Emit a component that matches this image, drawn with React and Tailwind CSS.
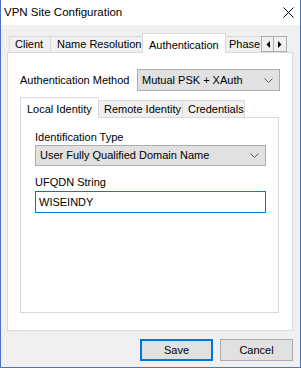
import React from 'react';

const font = { fontFamily: '"Liberation Sans", Arial, sans-serif' };

const Chevron = () => (
  <svg width="9" height="5" viewBox="0 0 9 5" className="block">
    <polyline points="0.5,0.5 4.5,4.5 8.5,0.5" fill="none" stroke="#606060" strokeWidth="1" />
  </svg>
);

const Select = ({ value, className }) => (
  <div className={`flex items-center justify-between border border-[#adadad] bg-[#e1e1e1] pl-[4px] pr-[6px] ${className}`}>
    <span className="text-[11px] leading-none text-black">{value}</span>
    <Chevron />
  </div>
);

const App = () => {
  return (
    <div
      className="w-[301px] h-[368px] flex flex-col border-l border-r border-b border-[#4f6fc9] bg-[#f0f0f0] overflow-hidden"
      style={font}
    >
      {/* title bar */}
      <div className="h-[25px] bg-white flex items-center justify-between pl-[3px] pr-[6px] shrink-0">
        <span className="text-[11.5px] text-black">VPN Site Configuration</span>
        <svg width="11" height="11" viewBox="0 0 11 11">
          <path d="M0.5 0.5 L10.5 10.5 M10.5 0.5 L0.5 10.5" stroke="#000" strokeWidth="1" />
        </svg>
      </div>

      <div className="flex-1 flex flex-col pl-[6px] pr-[7px] pt-[8px]">
        {/* outer tabs */}
        <div className="h-[19px] flex items-end pl-[2px] relative z-10">
          <div className="h-[16px] w-[41px] border-t border-l border-[#d9d9d9] bg-[#f0f0f0] text-[11px] flex items-center pl-[5px]">Client</div>
          <div className="h-[16px] w-[92px] border-t border-l border-[#d9d9d9] bg-[#f0f0f0] text-[11px] flex items-center pl-[6px]">Name Resolution</div>
          <div className="h-[20px] w-[84px] -mb-px border-t border-l border-r border-[#d9d9d9] bg-white text-[11px] flex items-start pt-[3px] pl-[6px]">Authentication</div>
          <div className="h-[16px] w-[35px] border-t border-[#d9d9d9] bg-[#f0f0f0] text-[11px] flex items-center pl-[3px] whitespace-nowrap">Phase</div>
          <div className="self-start mt-[3px] flex">
            <div className="w-[13px] h-[16px] border border-[#adadad] bg-[#f0f0f0] flex items-center justify-center">
              <svg width="4" height="7" viewBox="0 0 4 7"><polygon points="4,0 4,7 0.5,3.5" fill="#000" /></svg>
            </div>
            <div className="w-[13px] h-[16px] border border-l-0 border-[#adadad] bg-[#f0f0f0] flex items-center justify-center">
              <svg width="4" height="7" viewBox="0 0 4 7"><polygon points="0,0 0,7 3.5,3.5" fill="#000" /></svg>
            </div>
          </div>
        </div>

        {/* outer panel */}
        <div className="h-[279px] border border-[#d9d9d9] bg-white flex flex-col px-[12px] pt-[16px]">
          <div className="flex items-center justify-between">
            <span className="text-[11px] text-black">Authentication Method</span>
            <Select value="Mutual PSK + XAuth" className="w-[143px] h-[22px]" />
          </div>

          {/* inner tabs */}
          <div className="mt-[6px] h-[20px] flex items-end relative z-10">
            <div className="h-[21px] w-[79px] -mb-px border-t border-l border-r border-[#d9d9d9] bg-white text-[11px] flex items-start pt-[3px] pl-[6px]">Local Identity</div>
            <div className="h-[17px] w-[84px] border-t border-r border-[#d9d9d9] bg-[#f0f0f0] text-[11px] flex items-center pl-[5px]">Remote Identity</div>
            <div className="h-[17px] w-[62px] border-t border-r border-[#d9d9d9] bg-[#f0f0f0] text-[11px] flex items-center pl-[5px]">Credentials</div>
          </div>
          <div className="h-[196px] w-[259px] border border-[#d9d9d9] bg-white flex flex-col px-[14px] pt-[12px]">
            <span className="text-[11px] text-black leading-[14px]">Identification Type</span>
            <Select value="User Fully Qualified Domain Name" className="mt-[1px] w-[231px] h-[21px]" />
            <span className="mt-[9px] text-[11px] text-black leading-[14px]">UFQDN String</span>
            <div className="mt-[2px] w-[231px] h-[22px] border border-[#0078d7] bg-white flex items-center pl-[3px]">
              <span className="text-[11px] text-black">WISEINDY</span>
            </div>
          </div>
        </div>

        {/* buttons */}
        <div className="mt-[8px] flex justify-end gap-[7px]">
          <button className="w-[73px] h-[22px] border-2 border-[#0078d7] bg-[#e1e1e1] text-[11px] text-black">Save</button>
          <button className="w-[73px] h-[22px] border border-[#adadad] bg-[#e1e1e1] text-[11px] text-black">Cancel</button>
        </div>
      </div>
    </div>
  );
};

export default App;
